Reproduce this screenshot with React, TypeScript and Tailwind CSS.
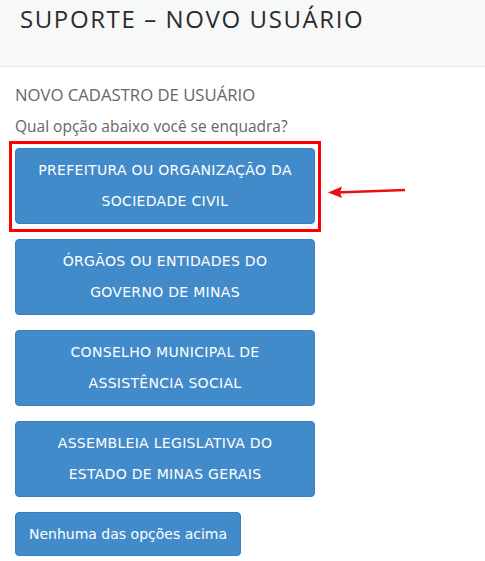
import React from "react";

const btn =
  "block w-[300px] rounded-[4px] border border-[#3a7fbd] bg-[#428bca] text-white text-center text-[14px] tracking-[0.3px] leading-[31px] py-[6px] px-2";

export default function App() {
  return (
    <div className="w-[485px] h-[561px] bg-white overflow-hidden relative">
      <div className="h-[67px] bg-[#f7f8f8] border-b border-[#e6e6e6] px-5 pt-[1px]">
        <h1
          className="text-[24px] font-medium text-[#2b2b2b] tracking-[1.6px]"
          style={{ fontFamily: '"Open Sans", sans-serif' }}
        >
          SUPORTE – NOVO USUÁRIO
        </h1>
      </div>
      <div className="px-[15px] pt-[17px]" style={{ fontFamily: '"Open Sans", sans-serif' }}>
        <h2 className="text-[16.7px] text-[#666] leading-[22px]">NOVO CADASTRO DE USUÁRIO</h2>
        <p className="text-[15.5px] text-[#666] mt-[10px] leading-[20px]">Qual opção abaixo você se enquadra?</p>
      </div>
      <div
        className="px-[15px] mt-[12px] flex flex-col gap-[15px]"
        style={{ fontFamily: '"DejaVu Sans", Verdana, sans-serif' }}
      >
        <div className="relative">
          <div className={btn}>
            PREFEITURA OU ORGANIZAÇÃO DA
            <br />
            SOCIEDADE CIVIL
          </div>
          <div className="absolute -left-[6px] -top-[7px] w-[312px] h-[91px] border-[3px] border-[#ff0000]" />
          <svg
            className="absolute left-[299px] top-[33px]"
            width="92"
            height="20"
            viewBox="0 0 92 20"
          >
            <line x1="22" y1="11.5" x2="91" y2="9" stroke="#e81010" strokeWidth="2.5" />
            <polygon points="14,11.5 28,5.5 26,11.5 28,17" fill="#e81010" />
          </svg>
        </div>
        <div className={btn}>
          ÓRGÃOS OU ENTIDADES DO
          <br />
          GOVERNO DE MINAS
        </div>
        <div className={btn}>
          CONSELHO MUNICIPAL DE
          <br />
          ASSISTÊNCIA SOCIAL
        </div>
        <div className={btn}>
          ASSEMBLEIA LEGISLATIVA DO
          <br />
          ESTADO DE MINAS GERAIS
        </div>
        <div>
          <div className="inline-block rounded-[4px] border border-[#3a7fbd] bg-[#428bca] text-white text-[14px] leading-[20px] px-[13px] py-[11px]">
            Nenhuma das opções acima
          </div>
        </div>
      </div>
    </div>
  );
}
